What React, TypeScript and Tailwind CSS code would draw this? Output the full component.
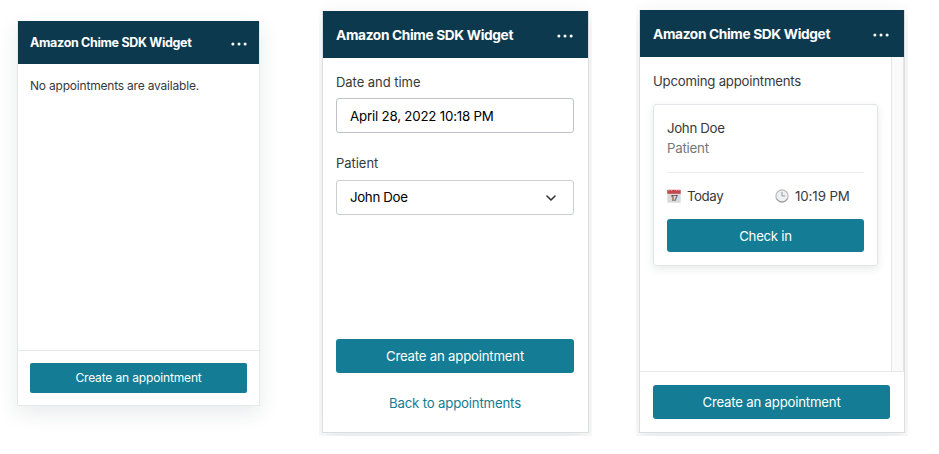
import type { ReactNode } from "react";

function Dots({ className }: { className: string }) {
  return (
    <svg viewBox="0 0 16 4" className={className} fill="#fff">
      <circle cx="1.9" cy="2" r="1.5" />
      <circle cx="8" cy="2" r="1.5" />
      <circle cx="14.1" cy="2" r="1.5" />
    </svg>
  );
}

function Calendar() {
  return (
    <svg viewBox="0 0 14 14" className="h-[14px] w-[14px]">
      <rect x="0.3" y="1" width="13.4" height="12.8" rx="0.6" fill="#dadadb" />
      <path d="M0.3 0.8h13.4v4H0.3z" fill="#c4484c" />
      <path d="M2 0v1.8M4.5 0v1.8M9.5 0v1.8M12 0v1.8" stroke="#e9d5d5" strokeWidth="0.8" />
      <text x="7" y="11.8" textAnchor="middle" fontSize="7.5" fontWeight="600" fill="#505052" fontFamily="Inter, sans-serif">17</text>
    </svg>
  );
}

function Clock() {
  return (
    <svg viewBox="0 0 14 14" className="h-[14px] w-[14px]">
      <circle cx="7" cy="7" r="6.1" fill="#eeeff1" stroke="#bcbec1" strokeWidth="1.3" />
      <path d="M1.6 9.6a6 6 0 0 0 10.8 0" fill="none" stroke="#989a9d" strokeWidth="1" />
      <path d="M7 2.8V7h3.2" fill="none" stroke="#909295" strokeWidth="0.9" />
    </svg>
  );
}

function Header({ children }: { children: ReactNode }) {
  return (
    <header className="flex h-[47px] shrink-0 items-center justify-between bg-[#0d394e] pr-[15px] pl-[13px] text-white">
      <h1 className="pt-[2px] text-[13.7px] font-bold tracking-[-0.34px]">{children}</h1>
      <Dots className="mt-[3px] h-[4px] w-[16px]" />
    </header>
  );
}

export default function App() {
  return (
    <main className="flex h-[454px] w-[939px] items-start overflow-hidden bg-white font-[Inter,'Liberation_Sans',sans-serif] whitespace-nowrap text-[#37393b]">
      <section className="mt-[21px] ml-[17px] flex h-[385px] w-[243px] shrink-0 flex-col border border-[#e6e8ea] border-t-0 bg-white shadow-[0_7px_20px_rgba(30,45,60,0.10)]">
        <header className="flex h-[43px] shrink-0 items-center justify-between bg-[#0d394e] px-3 text-white">
          <h1 className="pt-[2px] text-[12.5px] font-bold tracking-[-0.32px]">Amazon Chime SDK Widget</h1>
          <Dots className="mt-[3px] h-[4px] w-[16px]" />
        </header>
        <p className="flex-1 px-3 pt-[13px] text-[12px] leading-[18px] tracking-[-0.2px]">No appointments are available.</p>
        <footer className="border-t border-[#e6e8e9] px-3 pt-[12px] pb-[12px]">
          <button className="flex h-[30px] w-full items-center justify-center rounded-[2px] bg-[#147c94] text-[12px] tracking-[-0.15px] text-white">Create an appointment</button>
        </footer>
      </section>

      <div className="ml-[59px] flex h-[436px] w-[273px] shrink-0 overflow-hidden px-[3px] pt-[11px] pb-[3px]">
        <section className="flex h-[422px] w-[267px] flex-col border border-[#dcdfe1] border-t-0 bg-white shadow-[0_7px_20px_rgba(30,45,60,0.12)]">
          <Header>Amazon Chime SDK Widget</Header>
          <div className="flex flex-1 flex-col pt-[14px] pr-[14px] pl-[13px]">
            <label className="text-[13px] leading-5 tracking-[-0.04px]">Date and time</label>
            <div className="mt-[6px] flex h-[35px] items-center rounded-[3px] border border-[#bfc3c8] px-[13px] pt-[2px] text-[13.3px] tracking-[-0.2px] text-black">April 28, 2022 10:18 PM</div>
            <label className="mt-[20px] text-[13px] leading-5 tracking-[-0.04px]">Patient</label>
            <div className="mt-[7px] flex h-[35px] items-center justify-between rounded-[3px] border border-[#cbced1] pr-[16px] pl-[13px] text-[13.3px] tracking-[-0.35px] text-black">
              John Doe
              <svg viewBox="0 0 12 8" className="h-[8px] w-[12px]" fill="none" stroke="#333" strokeWidth="1.6" strokeLinecap="round" strokeLinejoin="round">
                <path d="M2 2l4 4 4-4" />
              </svg>
            </div>
            <button className="mt-[124px] flex h-[34px] items-center justify-center rounded-[3px] bg-[#147c94] pt-[2px] text-[13.2px] tracking-[-0.2px] text-white">Create an appointment</button>
            <a className="mt-[20px] text-center text-[13.2px] leading-5 tracking-[-0.17px] text-[#147c94]">Back to appointments</a>
          </div>
        </section>
      </div>

      <div className="ml-[44px] flex h-[436px] w-[272px] shrink-0 overflow-hidden pt-[10px] pr-[4px] pb-[4px] pl-[3px]">
        <section className="flex h-[423px] w-[266px] shrink-0 flex-col border border-[#dcdfe1] border-t-0 bg-white shadow-[0_7px_20px_rgba(30,45,60,0.12)]">
          <Header>Amazon Chime SDK Widget</Header>
          <div className="flex flex-1">
            <div className="flex-1 pt-[14px] pr-[13px] pl-[13px]">
              <h2 className="text-[13.2px] leading-5 tracking-[-0.22px]">Upcoming appointments</h2>
              <article className="mt-[13px] flex h-[162px] flex-col rounded-[3px] border border-[#e2e5e7] px-[13px] pt-[13px] shadow-[0_3px_8px_rgba(30,45,60,0.10)]">
                <p className="text-[13.3px] leading-5 tracking-[-0.35px]">John Doe</p>
                <p className="text-[13.3px] leading-5 tracking-[-0.25px] text-[#74777a]">Patient</p>
                <div className="mt-[14px] flex h-[47px] items-center border-t border-[#e9ebec] text-[13.3px] tracking-[-0.1px]">
                  <span className="flex w-[108px] items-center gap-[6px] tracking-[-0.45px]"><Calendar /><span className="pt-px">Today</span></span>
                  <span className="flex items-center gap-[6px]"><Clock /><span className="pt-px">10:19 PM</span></span>
                </div>
                <button className="flex h-[33px] items-center justify-center rounded-[3px] bg-[#147c94] pt-[2px] text-[13.2px] tracking-[-0.25px] text-white">Check in</button>
              </article>
            </div>
            <div className="w-[13px] border-r border-l border-[#e4e5e6] bg-[#fafafa]" />
          </div>
          <footer className="border-t border-[#e6e8e9] pt-[13px] pr-[14px] pb-[13px] pl-[13px]">
            <button className="flex h-[34px] w-full items-center justify-center rounded-[3px] bg-[#147c94] pt-[2px] text-[13.2px] tracking-[-0.2px] text-white">Create an appointment</button>
          </footer>
        </section>
      </div>
    </main>
  );
}
